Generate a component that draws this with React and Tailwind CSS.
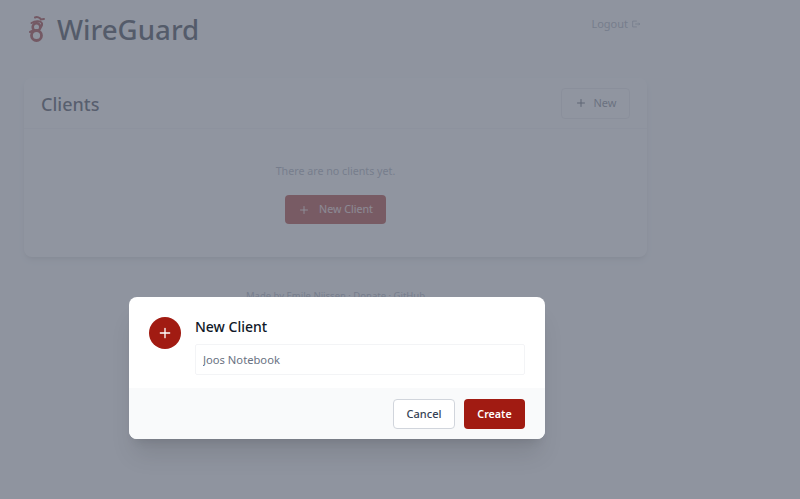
import React from "react";

const font = { fontFamily: '"Noto Sans", "Open Sans", sans-serif' };

function Plus({ className }) {
  return (
    <svg viewBox="0 0 24 24" fill="none" stroke="currentColor" strokeWidth="2" strokeLinecap="round" className={className}>
      <path d="M12 5v14M5 12h14" />
    </svg>
  );
}

function Logo() {
  return (
    <svg viewBox="0 0 20 28" fill="none" className="w-[20px] h-[28px] shrink-0">
      <circle cx="9.5" cy="20.5" r="5" stroke="#8f1010" strokeWidth="2.8" />
      <circle cx="9.5" cy="12" r="3.8" stroke="#8f1010" strokeWidth="2.6" />
      <path d="M4.5 8 C8 6 13 5.5 14.5 7.5 C16 9.5 14.5 11.5 13 13 M8 2.5 C10 1.5 13 2.5 14 4.5 L17 4 M3 17 L7 15" stroke="#8f1010" strokeWidth="2" strokeLinecap="round" />
    </svg>
  );
}

export default function App() {
  return (
    <div className="relative h-[499px] w-[800px] overflow-hidden bg-gray-50" style={font}>
      <div className="w-[671px] px-6">
        <header className="flex items-start justify-between h-[78px]">
          <div className="flex items-center pt-[13px] pl-[3px]">
            <Logo />
            <h1 className="ml-[10px] text-[27.7px] leading-[32px] font-medium text-gray-900">WireGuard</h1>
          </div>
          <div className="flex items-center gap-[3px] pt-[15px] pr-[6px] text-[11px] leading-[18px] text-gray-400">
            <span>Logout</span>
            <svg viewBox="0 0 24 24" fill="none" stroke="currentColor" strokeWidth="2" className="w-[10px] h-[10px]">
              <path d="M14 5H4v14h10M10 12h11M18 9l3 3-3 3" />
            </svg>
          </div>
        </header>

        <section className="bg-white rounded-lg shadow-md h-[179px] overflow-hidden">
          <div className="flex items-center justify-between h-[51px] pl-[17px] pr-[17px] border-b border-gray-100">
            <h2 className="pt-[2px] text-[18px] font-medium text-gray-800">Clients</h2>
            <button className="flex items-center gap-[7px] h-[31px] w-[69px] justify-center rounded-[4px] border border-gray-200 text-[11px] text-gray-500">
              <Plus className="w-[12px] h-[12px] text-gray-700" />
              New
            </button>
          </div>
          <div className="flex flex-col items-center pt-[34px]">
            <p className="text-[10.7px] leading-[16px] text-gray-400">There are no clients yet.</p>
            <button className="mt-[16px] flex items-center justify-center gap-[9px] h-[29px] w-[101px] rounded-[4px] bg-[#a11b12] text-white/80 text-[10.7px]">
              <Plus className="w-[12px] h-[12px]" />
              New Client
            </button>
          </div>
        </section>

        <footer className="mt-[31px] text-center text-[9.5px] leading-[16px] text-gray-400">
          Made by Emile Nijssen · Donate · GitHub
        </footer>
      </div>

      <div className="absolute inset-0 bg-[#6b7280] opacity-75" />

      <div className="absolute left-[129px] top-[297px] w-[416px] h-[142px] rounded-lg bg-white shadow-xl overflow-hidden">
        <div className="flex h-[91px] pt-[20px] pl-[20px] pr-[20px]">
          <div className="flex items-center justify-center w-[32px] h-[32px] rounded-full bg-[#a11b12] text-white shrink-0">
            <Plus className="w-[16px] h-[16px]" />
          </div>
          <div className="ml-[14px] flex-1">
            <h3 className="text-[14px] leading-[20px] font-medium text-gray-900">New Client</h3>
            <input
              readOnly
              placeholder="Joos Notebook"
              className="mt-[7px] block w-full h-[31px] rounded-[2px] border border-gray-100 px-[7px] text-[11.2px] outline-none placeholder:text-gray-500"
            />
          </div>
        </div>
        <div className="flex justify-end gap-[9px] h-[51px] bg-gray-50 pt-[11px] pr-[20px]">
          <button className="w-[62px] h-[30px] rounded-[4px] border border-gray-300 bg-white text-[11px] font-medium text-gray-700">Cancel</button>
          <button className="w-[61px] h-[30px] rounded-[4px] bg-[#a11b12] text-[10.7px] font-semibold text-white">Create</button>
        </div>
      </div>
    </div>
  );
}
